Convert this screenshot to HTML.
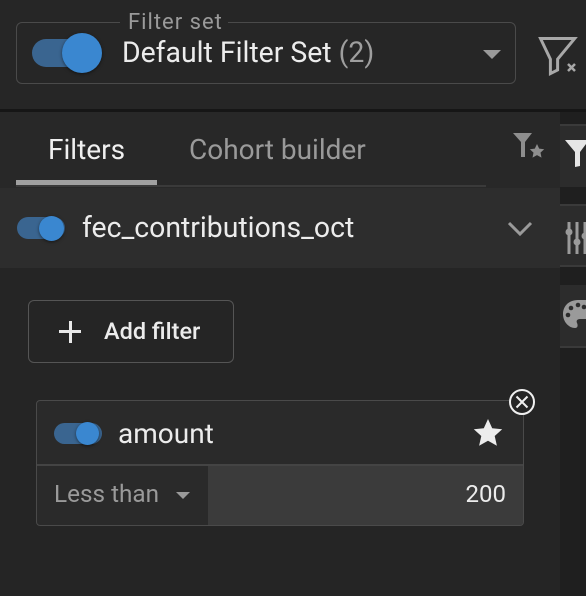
<!DOCTYPE html>
<html><head><style>
*{box-sizing:border-box;margin:0;padding:0}
body{width:586px;height:596px;background:#252525;font-family:Roboto,"Liberation Sans",sans-serif;color:#e8e8e8;position:relative;overflow:hidden}
.abs{position:absolute;white-space:nowrap}
.sw{position:absolute;border-radius:10px;background:#3a6590}
.sw i{position:absolute;border-radius:50%;background:#3a87d0;box-shadow:0 1px 3px rgba(0,0,0,.5)}
</style></head><body>
<div class="abs" style="left:0;top:0;width:586px;height:110px;background:#262626"></div>
<div class="abs" style="left:0;top:109px;width:586px;height:3px;background:#161616"></div>
<div class="abs" style="left:16px;top:22px;width:500px;height:62px;border:1px solid #4a4a4a;border-radius:6px"></div>
<div class="abs" style="left:120px;top:12px;width:108px;height:14px;background:#262626"></div>
<div class="abs" style="left:128px;top:11px;font-size:22px;letter-spacing:1px;color:#9a9a9a;line-height:24px">Filter set</div>
<div class="sw" style="left:32px;top:39px;width:64px;height:28px;border-radius:14px"><i style="left:30px;top:-6px;width:40px;height:40px"></i></div>
<div class="abs" style="left:122px;top:36px;font-size:28.4px;line-height:34px;color:#ececec">Default Filter Set <span style="color:#9e9e9e">(2)</span></div>
<div class="abs" style="left:483px;top:50px;width:0;height:0;border-left:9px solid transparent;border-right:9px solid transparent;border-top:9px solid #9a9a9a"></div>
<svg class="abs" style="left:536px;top:34px" width="46" height="44"><path d="M5 5H43L24 28V40L16 44V28Z" fill="none" stroke="#a8a8a8" stroke-width="3.3" transform="scale(.9)"/><path d="M32 30l7 7M39 30l-7 7" stroke="#a8a8a8" stroke-width="2.5"/></svg>
<div class="abs" style="left:0;top:112px;width:560px;height:484px;background:#252525"></div>
<div class="abs" style="left:0;top:112px;width:560px;height:76px;background:#282828"></div>
<div class="abs" style="left:48px;top:133px;font-size:28px;line-height:34px;color:#f0f0f0">Filters</div>
<div class="abs" style="left:189px;top:133px;font-size:28px;line-height:34px;color:#9a9a9a">Cohort builder</div>
<div class="abs" style="left:16px;top:180px;width:141px;height:6px;background:#a0a0a0"></div>
<div class="abs" style="left:16px;top:185px;width:470px;height:2px;background:#3a3a3a"></div>
<svg class="abs" style="left:510px;top:130px" width="38" height="32"><path d="M3 3H22L15 12V27H11V12Z" fill="#8e8e8e"/><path d="M27 14l2.2 4.6 5 .6-3.7 3.4 1 5-4.5-2.5-4.5 2.5 1-5-3.7-3.4 5-.6z" fill="#8e8e8e"/></svg>
<div class="abs" style="left:0;top:188px;width:560px;height:80px;background:#2d2d2d"></div>
<div class="sw" style="left:17px;top:217px;width:48px;height:22px;border-radius:11px"><i style="left:22px;top:-1px;width:25px;height:25px"></i></div>
<div class="abs" style="left:82px;top:211px;font-size:28.4px;line-height:34px;color:#ececec">fec_contributions_oct</div>
<svg class="abs" style="left:506px;top:218px" width="28" height="20"><path d="M3 5l11 11 11-11" fill="none" stroke="#9a9a9a" stroke-width="3"/></svg>
<div class="abs" style="left:560px;top:112px;width:26px;height:484px;background:#1f1f1f"></div>
<div class="abs" style="left:560px;top:124px;width:26px;height:63px;background:#2c2c2c;border-top:2px solid #3a3a3a"></div>
<div class="abs" style="left:560px;top:204px;width:26px;height:63px;background:#2c2c2c;border-top:2px solid #3a3a3a;border-bottom:2px solid #3a3a3a"></div>
<div class="abs" style="left:560px;top:285px;width:26px;height:63px;background:#2c2c2c;border-bottom:2px solid #3a3a3a"></div>
<svg class="abs" style="left:565px;top:140px" width="21" height="30"><path d="M0 0H24L15 12V26L10 27V12Z" fill="#e6e6e6"/></svg>
<svg class="abs" style="left:565px;top:222px" width="21" height="34"><g stroke="#9a9a9a" stroke-width="3"><path d="M4 0V32M12 0V32M20 0V32"/></g><circle cx="4" cy="10" r="3.5" fill="#9a9a9a"/><circle cx="12" cy="20" r="3.5" fill="#9a9a9a"/><circle cx="20" cy="14" r="3.5" fill="#9a9a9a"/></svg>
<svg class="abs" style="left:562px;top:298px" width="24" height="34"><path d="M16 2C6 2 1 9 1 16c0 8 6 14 12 14 3 0 3-3 2-5s0-4 3-4h6V2z" fill="#9a9a9a"/><circle cx="6" cy="17" r="2.3" fill="#2c2c2c"/><circle cx="9" cy="10" r="2.3" fill="#2c2c2c"/><circle cx="16" cy="7" r="2.3" fill="#2c2c2c"/><circle cx="22" cy="9" r="2.3" fill="#2c2c2c"/></svg>
<div class="abs" style="left:28px;top:300px;width:206px;height:63px;border:1px solid #555;border-radius:6px"></div>
<div class="abs" style="left:59px;top:330px;width:22px;height:3px;background:#e8e8e8"></div>
<div class="abs" style="left:68.5px;top:320.5px;width:3px;height:22px;background:#e8e8e8"></div>
<div class="abs" style="left:104px;top:316px;font-size:23.5px;font-weight:500;line-height:30px;color:#ececec">Add filter</div>
<div class="abs" style="left:36px;top:400px;width:488px;height:126px;border:1px solid #4a4a4a;border-radius:4px;background:#2a2a2a;overflow:hidden">
<div class="abs" style="left:0;top:63px;width:488px;height:2px;background:#444"></div>
<div class="abs" style="left:171px;top:65px;width:317px;height:60px;background:#3b3b3b"></div>
</div>
<div class="sw" style="left:54px;top:423px;width:48px;height:21px;border-radius:11px"><i style="left:22px;top:-1px;width:23px;height:23px"></i></div>
<div class="abs" style="left:118px;top:417px;font-size:28px;line-height:34px;color:#ececec">amount</div>
<svg class="abs" style="left:472px;top:418px" width="32" height="30"><path d="M16 1l4.2 9.2 10 1-7.5 6.8 2.2 9.8L16 22.7l-8.9 5.1 2.2-9.8L1.8 11.2l10-1z" fill="#ececec"/></svg>
<svg class="abs" style="left:507px;top:388px" width="30" height="30"><circle cx="15" cy="14" r="12" fill="#252525" stroke="#f0f0f0" stroke-width="2"/><path d="M9.5 8.5l11 11M20.5 8.5l-11 11" stroke="#f0f0f0" stroke-width="2"/></svg>
<div class="abs" style="left:54px;top:479px;font-size:24.3px;line-height:30px;color:#9a9a9a">Less than</div>
<div class="abs" style="left:176px;top:492px;width:0;height:0;border-left:7px solid transparent;border-right:7px solid transparent;border-top:7px solid #9a9a9a"></div>
<div class="abs" style="left:400px;top:479px;width:106px;text-align:right;font-size:24px;line-height:30px;color:#ececec">200</div>
</body></html>
